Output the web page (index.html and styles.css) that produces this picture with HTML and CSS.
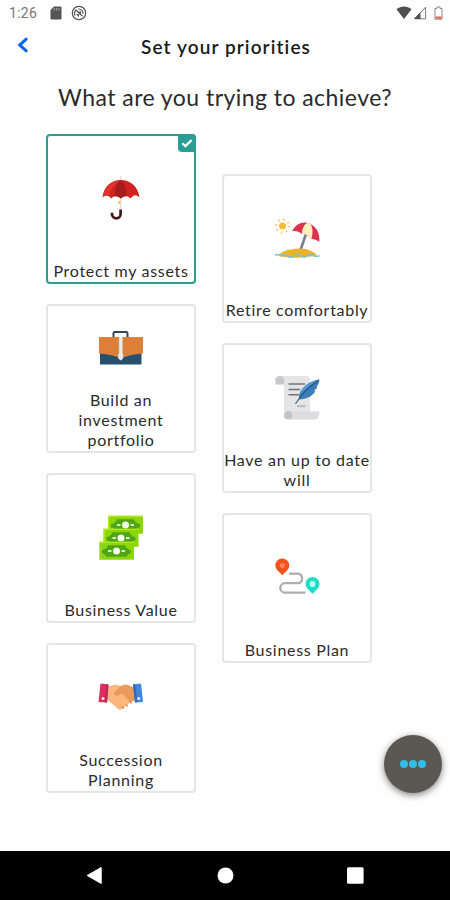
FILE: index.html
```html
<!doctype html>
<html lang="en">
    <head>
        <title>Set your priorities</title>
        <meta charset="UTF-8">
        <meta name="viewport" content="width=device-width, initial-scale=1">
        <link rel="stylesheet" href="styles.css">
    </head>

    <body>
        <div class="status">
            <span class="time">1:26</span>
            <svg class="sd" width="12" height="14" viewBox="0 0 12 14">
                <path d="M4 0.5h6.5a1 1 0 0 1 1 1v11a1 1 0 0 1-1 1h-9a1 1 0 0 1-1-1V4z" fill="#555"/>
                <path d="M4.3 2v2.5M6.6 2v2.5M8.9 2v2.5" stroke="#aaa" stroke-width="1"/>
            </svg>
            <svg class="sync" width="16" height="16" viewBox="0 0 16 16" fill="none" stroke="#555">
                <circle cx="8" cy="8" r="6.7" stroke-width="1.2"/>
                <path d="M4.2 10.5A4.5 4.5 0 0 1 5 5l6.5 6.3M7.5 4a4.2 4.2 0 0 1 4.5 5" stroke-width="1.2"/>
                <path d="M6.5 7.5l3.5-1.5v3zM5 9h3v3z" fill="#555" stroke="none"/>
            </svg>
            <div class="signals">
                <svg width="16" height="14" viewBox="0 0 16 14">
                    <path d="M0.5 3.2C5-0.4 11-0.4 15.5 3.2L8 13z" fill="#505050"/>
                </svg>
                <svg width="14" height="14" viewBox="0 0 14 14">
                    <path d="M1.5 12.8L12.6 1.2v11.6z" fill="#fff" stroke="#777"/>
                    <path d="M1 13l6.5-7v7z" fill="#505050"/>
                </svg>
                <svg class="battery" width="9" height="14" viewBox="0 0 9 14">
                    <path d="M1 2.5h2V1h3v1.5h2v10.7H1z" fill="#fff" stroke="#888"/>
                    <path d="M1.500 10.500h6v2.200h-6z" fill="#e2654f"/>
                </svg>
            </div>
        </div>

        <div class="header">
            <svg class="back" width="12" height="16" viewBox="0 0 12 16">
                <path d="M9.2 2.2L2.8 8l6.4 5.8" fill="none" stroke="#0b60f5" stroke-width="3" stroke-linecap="round"/>
            </svg>
            <h1>Set your priorities</h1>
        </div>

        <h2>What are you trying to achieve?</h2>

        <div class="goals">
            <div class="column">
                <div class="card selected">
                    <span class="check">
                        <svg width="12" height="9" viewBox="0 0 12 9">
                            <path d="M1.4 4.2l3 3L10.6 1.2" fill="none" stroke="#fff" stroke-width="2.3"/>
                        </svg>
                    </span>
                    <div class="icon">
                        <svg width="44" height="44" viewBox="0 0 44 44">
                            <path d="M21.8 0v36" stroke="#ddd6d3" stroke-width="1.1"/>
                            <path d="M3.5 21.5C4.5 11 12 4 21.8 4s17.500 7 18.700 17.500q-3.500-3.500-6.500-1.500-1.500 1-2.500 2.500-2-2.500-5-2.500-3 0-4.700 2.500-1.700-2.500-4.700-2.500-3 0-5 2.500-1-1.500-2.300-2.300-3-1.700-6.300 1.300z" fill="#d02220"/>
                            <path d="M21.800 4C17 8 15.500 14 16 20.200q3.500 0 5.800 2.300 2.300-2.300 5.500-2.300C28 14 26 8 21.800 4z" fill="#a51c1e"/>
                            <path d="M4 20C6 11 12 5 21.800 4 16 7 12 12 10.500 19.500z" fill="#e0352a"/>
                            <circle cx="20.300" cy="26.500" r="1.300" fill="#f8bd29"/>
                            <path d="M21.600 33.500v4.500a4.300 4.300 0 0 1-8.600 0v-1.200" fill="none" stroke="#43151b" stroke-width="2.700"/>
                        </svg>
                    </div>
                    <p>Protect my assets</p>
                </div>

                <div class="card">
                    <div class="icon">
                        <svg width="44" height="44" viewBox="0 0 44 44">
                            <path d="M14.500 11.500V7.200a1.300 1.300 0 0 1 1.300-1.300h11.400a1.300 1.300 0 0 1 1.300 1.300v4.300" fill="none" stroke="#35465b" stroke-width="2"/>
                            <path d="M1 20h41.500v18.500H1z" fill="#26506d"/>
                            <path d="M0 11h44v16.500Q33 28 26 31h-8Q11 28 0 27.500z" fill="#dc8039"/>
                            <path d="M19.800 11h4v19.500h-4z" fill="#d3d2d2"/>
                            <path d="M20.700 11h2v19h-2z" fill="#f4eee9"/>
                            <path d="M19.200 28h5v4.500l-2.500 2-2.500-2z" fill="#e5e8ea"/>
                        </svg>
                    </div>
                    <p>Build an<br>investment<br>portfolio</p>
                </div>

                <div class="card">
                    <div class="icon">
                        <svg width="44" height="44" viewBox="0 0 44 44">
                            <defs>
                                <g id="note">
                                    <path d="M0 0h35v18H0z" fill="#8dd60a"/>
                                    <path d="M0 0h35v1.300H1.300V18H0z" fill="#b5ea1d"/>
                                    <path d="M9 3.500h17q1 3.500 6 5v3q-4 1-4 3.500H7q0-2.500-4-3.500v-3q5-1.500 6-5z" fill="#4fa51a"/>
                                    <circle cx="17.500" cy="9.200" r="3.500" fill="#f4fbe9"/>
                                    <path d="M9 9.200h3.500M22.500 9.200H26" stroke="#d9f1bc" stroke-width="2"/>
                                </g>
                            </defs>
                            <use href="#note" x="9" y="-0.200"/>
                            <use href="#note" x="4.500" y="12.800"/>
                            <use href="#note" x="0" y="25.700"/>
                        </svg>
                    </div>
                    <p>Business Value</p>
                </div>

                <div class="card">
                    <div class="icon">
                        <svg width="44" height="44" viewBox="0 0 44 44">
                            <path d="M8 12l8-2.500 6 1.500 6-1.500 7.500 3v11.500l-13 10.200q-1.500 1-3 0L8 24.500z" fill="#fcb77c"/>
                            <path d="M14.500 18.500L21 11.500q3-2.500 7-1.500l7.500 3v12.500l-4 2L23 18.500l-4 2q-3 1-4.500-2z" fill="#eb9a5c"/>
                            <path d="M23 31.500l2 2M27 29.500l2 2M30.500 26.500l2 2" stroke="#d9834d" stroke-width="1.200"/>
                            <path d="M1.500 8.500l8 1-1.500 18-8.500-.5z" fill="#dc2f5e"/>
                            <path d="M7 9.500l2.500.1-1.500 18-2-.1z" fill="#b72a57"/>
                            <path d="M42 8.500l-8 1 2 18 8-.5z" fill="#4186dd"/>
                            <path d="M34 9.500l2.200-.2 2 18-2.200.1z" fill="#3068b6"/>
                            <circle cx="4" cy="23.500" r="1.500" fill="#ffe8ef"/>
                            <circle cx="39.700" cy="23.500" r="1.500" fill="#e8f3ff"/>
                        </svg>
                    </div>
                    <p>Succession<br>Planning</p>
                </div>
            </div>

            <div class="column second">
                <div class="card">
                    <div class="icon">
                        <svg width="44" height="44" viewBox="0 0 44 44">
                            <circle cx="7.500" cy="10" r="3.500" fill="#fdbb35"/>
                            <circle cx="7.500" cy="10" r="6.500" fill="none" stroke="#fdbd62" stroke-width="2.200" stroke-dasharray="1.300 3.800"/>
                            <path d="M32 15L25.500 34" stroke="#75818d" stroke-width="2.600"/>
                            <path d="M17 15.500C21 7 29 4.500 35.500 8c6.500 3.500 9.700 10 8.800 18-2-2-5-3-7.800-3-2-3-6-5-9.500-5-3-2.500-7-3.500-10-2.500z" fill="#dc3350"/>
                            <path d="M32 7q2-.5 3.500 1c2.500 4 2.500 9 1 15-2-3-6-5-9.500-5 0-5 2-9.500 5-11z" fill="#fff0bd"/>
                            <path d="M3 40q5-6 13-6.500 5-1.500 11-1 5 0 10 3 4 1.500 5 4-20 4-39 .5z" fill="#eab329"/>
                            <path d="M0 39.300q3-2 6 .5 3-2.500 6 0 4 3 7.500 0 3-2 6 0 3.500 3 7 0 3-2.500 6 0 3 1.500 6-.3" fill="none" stroke="#79c5df" stroke-width="1.500"/>
                        </svg>
                    </div>
                    <p>Retire comfortably</p>
                </div>

                <div class="card">
                    <div class="icon">
                        <svg width="44" height="44" viewBox="0 0 44 44">
                            <path d="M4.500 0H31q4 0 4 4v32H9V8H4.500z" fill="#e5e5e6"/>
                            <path d="M9 8.500H.500V4q0-4 4.300-4Q9 0 9 4z" fill="#c8c8ca"/>
                            <path d="M14 35.500h30.500q0 8-5.500 8H13z" fill="#dcdcde"/>
                            <path d="M13 35q4 0 4 4.500T13 43.500Q9 43.500 9 39.300T13 35z" fill="#c4c4c6"/>
                            <path d="M13.500 8H30M13.500 13.500H25M13.500 18.800H24" stroke="#707477" stroke-width="1.600"/>
                            <path d="M22 30.200h8.500" stroke="#b9bbbd" stroke-width="2"/>
                            <path d="M24 23.500c-1-8 7-18 20.500-20-.5 4-2 6-3 7.500l.8 1-3.300 2.500 1.500.8c-3.500 5-8.500 8-16.500 8.200z" fill="#3c7dba"/>
                            <path d="M20.500 27.800L25 21.500Q32 12 44 4" fill="none" stroke="#26557e" stroke-width="1.100"/>
                            <path d="M24 20C25 12 34 5 44 3.700 34 9 28 14 24 20z" fill="#549bd5"/>
                        </svg>
                    </div>
                    <p>Have an up to date<br>will</p>
                </div>

                <div class="card">
                    <div class="icon">
                        <svg width="44" height="44" viewBox="0 0 44 44">
                            <path d="M14 18.700h9a4.800 4.800 0 0 1 0 9.500H10a4.700 4.700 0 0 0 0 9.400h20.500" fill="none" stroke="#aeaeb0" stroke-width="2.300"/>
                            <path d="M7.300 20.300L2.300 15.300a7 7 0 1 1 10 0z" fill="#f4511f"/>
                            <circle cx="7.300" cy="10.500" r="2.500" fill="#ff8452"/>
                            <path d="M37.500 38.800l-5-5a7 7 0 1 1 10 0z" fill="#19dfc5"/>
                            <circle cx="37.500" cy="29" r="2.900" fill="#c1fff1"/>
                        </svg>
                    </div>
                    <p>Business Plan</p>
                </div>
            </div>
        </div>

        <div class="chat">
            <span></span>
            <span></span>
            <span></span>
        </div>

        <div class="navbar">
            <svg width="18" height="18" viewBox="0 0 18 18"><path d="M1.200 8.500L15.200 0.500v16z" fill="#fff" stroke="#fff" stroke-linejoin="round"/></svg>
            <svg width="18" height="18" viewBox="0 0 18 18"><circle cx="9.500" cy="8.500" r="8" fill="#fff"/></svg>
            <svg width="18" height="18" viewBox="0 0 18 18"><rect x="1" y="0.200" width="16.600" height="16.600" rx="1.500" fill="#fff"/></svg>
        </div>
    </body>
</html>
```

FILE: styles.css
```css
* {
  box-sizing: border-box;
  margin: 0;
  padding: 0;
}

body {
  display: flex;
  flex-direction: column;
  height: 900px;
  overflow: hidden;
  background: #fefefe;
  color: #2b2b2b;
  font-family: Lato, "Open Sans", sans-serif;
}

svg {
  display: block;
  overflow: visible;
}

/* Phone status bar */
.status {
  display: flex;
  align-items: center;
  height: 26px;
  padding: 0 7px 0 9px;
}

.time {
  width: 41px;
  color: #777;
  font-family: Roboto, sans-serif;
  font-size: 14px;
  letter-spacing: 0.3px;
}

.sync {
  margin-left: 9px;
}

.signals {
  display: flex;
  gap: 1px;
  margin-left: auto;
}

.battery {
  margin-left: 6px;
}

/* Title with the back arrow */
.header {
  display: flex;
  align-items: center;
  height: 40px;
  padding-left: 17px;
}

.back {
  margin-top: -3px;
}

.header h1 {
  flex: 1;
  padding-right: 27px;
  color: #1a1a1a;
  font-size: 19px;
  font-weight: 600;
  text-align: center;
  letter-spacing: 1.1px;
}

h2 {
  height: 68px;
  padding-top: 16px;
  font-size: 23px;
  font-weight: 400;
  line-height: 30px;
  text-align: center;
  letter-spacing: 0.45px;
}

/* Two columns of cards, the second one starts lower */
.goals {
  display: flex;
  flex: 1;
  gap: 26px;
  padding-left: 46px;
}

.column {
  display: flex;
  flex-direction: column;
  gap: 20px;
  width: 150px;
}

.second {
  padding-top: 39.600px;
}

.card {
  position: relative;
  display: flex;
  flex-direction: column;
  height: 149.700px;
  border: 2px solid #e5e5e6;
  border-radius: 4px;
  background: #fff;
}

.selected {
  border-color: #2a9d95;
}

.check {
  position: absolute;
  top: -2px;
  right: -2px;
  display: flex;
  align-items: center;
  justify-content: center;
  width: 18px;
  height: 18px;
  border-radius: 0 4px 0 4px;
  background: #2a9d95;
}

.icon {
  display: flex;
  flex: 1;
  align-items: center;
  justify-content: center;
}

.card p {
  margin: 0 -2px;
  padding-bottom: 1px;
  font-size: 16px;
  line-height: 20px;
  text-align: center;
  letter-spacing: 0.7px;
  white-space: nowrap;
}

/* Floating chat button */
.chat {
  position: absolute;
  top: 735px;
  left: 384px;
  display: flex;
  align-items: center;
  justify-content: center;
  gap: 1px;
  width: 58px;
  height: 58px;
  border-radius: 50%;
  background: #595852;
  box-shadow: 0 2px 7px rgba(0, 0, 0, 0.5);
}

.chat span {
  width: 8px;
  height: 8px;
  border-radius: 50%;
  background: #31bde8;
}

/* Android buttons */
.navbar {
  display: flex;
  align-items: center;
  justify-content: center;
  gap: 112px;
  height: 49px;
  background: #000;
}
```
